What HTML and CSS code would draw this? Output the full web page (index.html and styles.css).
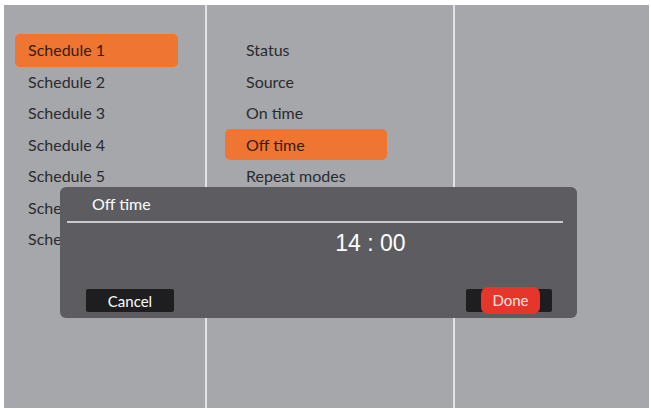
FILE: index.html
```html
<!DOCTYPE html>
<html lang="en">
<head>
  <meta charset="UTF-8" />
  <meta name="viewport" content="width=device-width, initial-scale=1" />
  <title>Schedule - Off time</title>
  <link rel="stylesheet" href="styles.css">
</head>
<body>

  <div class="screen">
    <!-- schedule list -->
    <div class="col">
      <ul class="menu menu-left">
        <li class="active">Schedule 1</li>
        <li>Schedule 2</li>
        <li>Schedule 3</li>
        <li>Schedule 4</li>
        <li>Schedule 5</li>
        <li>Schedule 6</li>
        <li>Schedule 7</li>
      </ul>
    </div>

    <!-- settings of the selected schedule -->
    <div class="col">
      <ul class="menu menu-mid">
        <li>Status</li>
        <li>Source</li>
        <li>On time</li>
        <li class="active">Off time</li>
        <li>Repeat modes</li>
      </ul>
    </div>

    <div class="col last"></div>

    <!-- time picker popup -->
    <div class="dialog">
      <div class="dialog-title">Off time</div>
      <div class="dialog-line"></div>
      <div class="dialog-time">14 : 00</div>
      <div class="dialog-buttons">
        <button class="btn">Cancel</button>
        <button class="btn btn-done"><span>Done</span></button>
      </div>
    </div>
  </div>

</body>
</html>
```

FILE: styles.css
```css
body {
  margin: 0;
  background: #fff;
  font-family: Lato, "Open Sans", sans-serif;
}
.screen {
  position: relative;
  display: grid;
  grid-template-columns: 203px 248px 1fr;
  margin: 5px 2px 0 4px;
  height: 403px;
  background: #a5a7ab;
}
.col {
  border-right: 2px solid #e2e3e6;
}
.col.last {
  border-right: none;
}
.menu {
  list-style: none;
  margin: 0;
  padding: 0;
}
.menu li {
  height: 31.5px;
  line-height: 31.5px;
  font-size: 16px;
  color: #2b2b30;
  border-radius: 5px;
  white-space: nowrap;
}
.menu li.active {
  background: #ee7632;
  color: #3a1a0c;
}
.menu-left {
  padding: 29px 0 0 11px;
  width: 163px;
}
.menu-left li {
  padding-left: 13px;
}
.menu-left li.active {
  height: 32.5px;
  margin-bottom: -1px;
}
.menu-mid {
  padding: 29px 0 0 18px;
  width: 162px;
}
.menu-mid li {
  padding-left: 21px;
}

.dialog {
  position: absolute;
  left: 56px;
  top: 182px;
  width: 517px;
  height: 131px;
  background: #5c5c61;
  border-radius: 6px;
  display: flex;
  flex-direction: column;
  font-family: "Liberation Sans", Arial, sans-serif;
  color: #fff;
}
.dialog-title {
  height: 34px;
  line-height: 34px;
  padding-left: 32px;
  font-family: Lato, "Open Sans", sans-serif;
  font-size: 16px;
}
.dialog-line {
  height: 2px;
  margin: 0 14px 0 7px;
  background: #cbcbce;
}
.dialog-time {
  height: 40px;
  line-height: 40px;
  text-align: center;
  font-size: 23px;
  padding-left: 104px;
}
.dialog-buttons {
  margin-top: auto;
  display: flex;
  justify-content: space-between;
  padding: 0 25px 6px 26px;
}
.btn {
  width: 88px;
  height: 23px;
  border: none;
  border-radius: 2px;
  background: #1e1e20;
  color: #fff;
  font-family: Lato, "Open Sans", sans-serif;
  font-size: 15px;
  padding: 0;
}
.btn-done {
  position: relative;
  width: 86px;
}
.btn-done span {
  position: absolute;
  left: 15px;
  top: -2px;
  width: 59px;
  height: 27px;
  line-height: 27px;
  background: #e6352a;
  border-radius: 7px;
  color: #f4e6e0;
}
```
